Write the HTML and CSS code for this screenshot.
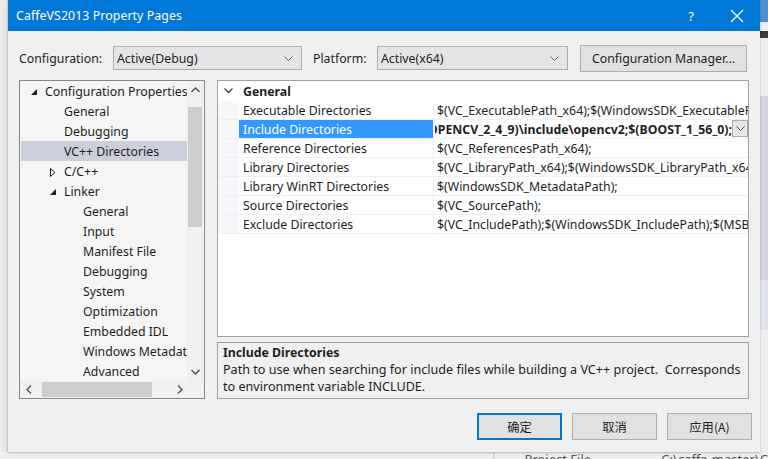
FILE: index.html
```html
<!DOCTYPE html>
<html>
<head>
<meta charset="utf-8">
<link rel="stylesheet" href="styles.css">
</head>
<body>
<div class="desk">
  <div class="top-row">
    <div class="shadow-left"></div>
    <div class="dialog">
      <div class="titlebar">
        <span class="title">CaffeVS2013 Property Pages</span>
        <span class="tb-help">?</span>
        <span class="tb-close">
          <svg width="14" height="14" viewBox="0 0 14 14"><path d="M1 1 L13 13 M13 1 L1 13" stroke="#fff" stroke-width="1.3" fill="none"/></svg>
        </span>
      </div>
      <div class="body">
        <div class="config-row">
          <span class="lbl lbl-config">Configuration:</span>
          <div class="combo combo-config"><span>Active(Debug)</span><svg class="chev" width="9" height="5" viewBox="0 0 9 5"><path d="M0.5 0.5 L4.5 4.5 L8.5 0.5" stroke="#606060" fill="none"/></svg></div>
          <span class="lbl lbl-platform">Platform:</span>
          <div class="combo combo-platform"><span>Active(x64)</span><svg class="chev" width="9" height="5" viewBox="0 0 9 5"><path d="M0.5 0.5 L4.5 4.5 L8.5 0.5" stroke="#606060" fill="none"/></svg></div>
          <div class="btn btn-cfgmgr">Configuration Manager...</div>
        </div>
        <div class="main">
          <div class="tree">
            <div class="tree-inner">
              <div class="tree-rows">
                <div class="trow l0"><span class="tri"><svg width="6" height="6" viewBox="0 0 6 6"><path d="M6 0 L6 6 L0 6 Z" fill="#1e1e1e"/></svg></span>Configuration Properties</div>
                <div class="trow l1">General</div>
                <div class="trow l1">Debugging</div>
                <div class="trow l1 sel">VC++ Directories</div>
                <div class="trow l1 haschild"><span class="tri"><svg width="6" height="9" viewBox="0 0 6 9"><path d="M0.5 0.5 L5 4.5 L0.5 8.5 Z" stroke="#1e1e1e" fill="none"/></svg></span>C/C++</div>
                <div class="trow l1 haschild"><span class="tri"><svg width="6" height="6" viewBox="0 0 6 6"><path d="M6 0 L6 6 L0 6 Z" fill="#1e1e1e"/></svg></span>Linker</div>
                <div class="trow l2">General</div>
                <div class="trow l2">Input</div>
                <div class="trow l2">Manifest File</div>
                <div class="trow l2">Debugging</div>
                <div class="trow l2">System</div>
                <div class="trow l2">Optimization</div>
                <div class="trow l2">Embedded IDL</div>
                <div class="trow l2">Windows Metadata</div>
                <div class="trow l2">Advanced</div>
              </div>
              <div class="vscroll">
                <svg class="sarrow" width="9" height="6" viewBox="0 0 9 6"><path d="M0.5 5 L4.5 1 L8.5 5" stroke="#505050" stroke-width="1.4" fill="none"/></svg>
                <div class="vtrack"><div class="vthumb"></div></div>
                <svg class="sarrow" width="9" height="6" viewBox="0 0 9 6"><path d="M0.5 1 L4.5 5 L8.5 1" stroke="#505050" stroke-width="1.4" fill="none"/></svg>
              </div>
            </div>
            <div class="hscroll-row">
              <div class="hscroll">
                <svg class="sarrow" width="6" height="9" viewBox="0 0 6 9"><path d="M5 0.5 L1 4.5 L5 8.5" stroke="#505050" stroke-width="1.4" fill="none"/></svg>
                <div class="htrack"><div class="hthumb"></div></div>
                <svg class="sarrow" width="6" height="9" viewBox="0 0 6 9"><path d="M1 0.5 L5 4.5 L1 8.5" stroke="#505050" stroke-width="1.4" fill="none"/></svg>
              </div>
              <div class="corner"></div>
            </div>
          </div>
          <div class="right">
            <div class="grid">
              <div class="grow header">
                <span class="gutter"><svg width="9" height="6" viewBox="0 0 9 6"><path d="M0.5 0.5 L4.5 4.5 L8.5 0.5" stroke="#404040" stroke-width="1.3" fill="none"/></svg></span>
                <span class="hname">General</span>
              </div>
              <div class="grow"><span class="gutter"></span><span class="name">Executable Directories</span><span class="val">$(VC_ExecutablePath_x64);$(WindowsSDK_ExecutablePath);$(VS_ExecutablePath)</span></div>
              <div class="grow selrow"><span class="gutter"></span><span class="name">Include Directories</span><span class="val edit"><span class="edit-clip"><b>$(OPENCV_2_4_9)\include\opencv2;$(BOOST_1_56_0);</b></span><span class="ddbtn"><svg width="9" height="5" viewBox="0 0 9 5"><path d="M0.5 0.5 L4.5 4.5 L8.5 0.5" stroke="#505050" fill="none"/></svg></span></span></div>
              <div class="grow"><span class="gutter"></span><span class="name">Reference Directories</span><span class="val">$(VC_ReferencesPath_x64);</span></div>
              <div class="grow"><span class="gutter"></span><span class="name">Library Directories</span><span class="val">$(VC_LibraryPath_x64);$(WindowsSDK_LibraryPath_x64);$(NETFXKitsDir)</span></div>
              <div class="grow"><span class="gutter"></span><span class="name">Library WinRT Directories</span><span class="val">$(WindowsSDK_MetadataPath);</span></div>
              <div class="grow"><span class="gutter"></span><span class="name">Source Directories</span><span class="val">$(VC_SourcePath);</span></div>
              <div class="grow"><span class="gutter"></span><span class="name">Exclude Directories</span><span class="val">$(VC_IncludePath);$(WindowsSDK_IncludePath);$(MSBuild_ExecutablePath)</span></div>
            </div>
            <div class="desc">
              <div class="desc-title">Include Directories</div>
              <div class="desc-text">Path to use when searching for include files while building a VC++ project.&nbsp; Corresponds to environment variable INCLUDE.</div>
            </div>
          </div>
        </div>
        <div class="buttons">
          <div class="btn dbtn primary">确定</div>
          <div class="btn dbtn">取消</div>
          <div class="btn dbtn">应用(A)</div>
        </div>
      </div>
    </div>
    <div class="shadow-right"></div>
  </div>
  <div class="bottom-row">
    <span class="bcell b1"></span>
    <span class="bcell b2">Project File</span>
    <span class="bcell b3">C:\caffe-master\C</span>
  </div>
</div>
</body>
</html>
```
FILE: styles.css
```css
* { box-sizing: border-box; }
html, body { margin: 0; padding: 0; }
body {
  width: 768px;
  height: 459px;
  overflow: hidden;
  background: #e9e9ea;
  font-family: "Noto Sans", "Noto Sans CJK SC", sans-serif;
  font-size: 12.3px;
  color: #1e1e1e;
}
.desk { display: flex; flex-direction: column; }
.top-row { display: flex; height: 452px; }
.shadow-left {
  width: 8px;
  background: linear-gradient(to right, #ececec, #e4e4e4 80%, #d4d4d4);
}
.shadow-right {
  width: 8px;
  background: linear-gradient(to bottom, #4f90d0 0, #4f90d0 22px, #eeeff2 22px, #eeeff2 31px, #3a3a3a 31px, #3a3a3a 38px, #eeeff2 38px, #eeeff2 96px, #d3d4dc 96px, #d3d4dc 280px, #dfe3ec 280px, #dfe3ec 330px, #efefef 330px);
}
.dialog {
  width: 752px;
  display: flex;
  flex-direction: column;
  background: #f0f0f0;
  box-shadow: 0 1px 2px rgba(0,0,0,0.25);
  position: relative;
}
.titlebar {
  height: 31px;
  background: #0078d7;
  color: #fff;
  display: flex;
  align-items: center;
  padding-left: 8px;
}
.title { font-size: 12.4px; flex: 1; letter-spacing: 0.05px; }
.tb-help { width: 46px; text-align: center; font-size: 13px; }
.tb-close { width: 46px; display: flex; justify-content: center; align-items: center; }
.body { flex: 1; display: flex; flex-direction: column; padding: 13px 0 0 11px; }
.config-row { display: flex; align-items: center; height: 28px; }
.lbl-config { width: 94px; }
.combo {
  height: 24px;
  border: 1px solid #adadad;
  background: #e5e5e5;
  display: flex;
  align-items: center;
  justify-content: space-between;
  padding: 0 8px 0 3px;
}
.combo-config { width: 189px; }
.lbl-platform { margin-left: 11px; width: 64px; }
.combo-platform { width: 191px; }
.btn {
  border: 1px solid #adadad;
  background: #e1e1e1;
  display: flex;
  align-items: center;
  justify-content: center;
}
.btn-cfgmgr { margin-left: 12px; width: 167px; height: 27px; }
.main { display: flex; margin-top: 8px; }
.tree {
  width: 186px;
  height: 319px;
  border: 1px solid #828790;
  background: #f5f5f5;
  display: flex;
  flex-direction: column;
}
.tree-inner { flex: 1; display: flex; min-height: 0; }
.tree-rows { flex: 1; overflow: hidden; padding: 0 0 0 1px; }
.trow {
  height: 20px;
  line-height: 21px;
  white-space: nowrap;
  overflow: hidden;
  position: relative;
}
.trow.l0 { padding-left: 24px; }
.trow.l1 { padding-left: 43px; }
.trow.l2 { padding-left: 62px; }
.trow.sel { background: #cccedb; }
.tri { position: absolute; top: 1px; height: 20px; display: flex; align-items: center; }
.l0 .tri { left: 10px; }
.l1 .tri { left: 29px; }
.vscroll {
  width: 16px;
  display: flex;
  flex-direction: column;
  align-items: center;
  background: #f0f0f0;
  margin-right: 1px;
  padding: 6px 0 6px;
}
.vtrack { flex: 1; width: 100%; padding: 14px 1px 0; }
.vthumb { height: 120px; background: #cdcdcd; }
.hscroll-row { display: flex; height: 17px; }
.hscroll {
  flex: 1;
  display: flex;
  align-items: center;
  padding: 0 6px;
  background: #f0f0f0;
}
.htrack { flex: 1; height: 100%; padding: 1px 25px 1px 10px; }
.hthumb { width: 110px; height: 100%; background: #cdcdcd; }
.corner { width: 17px; background: #f0f0f0; }
.right { margin-left: 12px; display: flex; flex-direction: column; width: 532px; }
.grid {
  height: 257px;
  border: 1px solid #a0a0a0;
  background: #fff;
}
.grow {
  display: flex;
  height: 19px;
  border-bottom: 1px solid #f0f0f0;
  white-space: nowrap;
}
.grow.header { height: 20px; border-bottom: none; }
.gutter {
  width: 21px;
  flex: none;
  background: #f7f8fb;
  display: flex;
  align-items: center;
  justify-content: center;
}
.header .gutter { background: #fff; }
.hname { font-weight: bold; padding-left: 4px; line-height: 21px; }
.name {
  width: 195px;
  flex: none;
  padding-left: 4px;
  line-height: 19px;
  border-right: 1px solid #f0f0f0;
  overflow: hidden;
}
.selrow .name { background: #3399ff; color: #fff; }
.val {
  flex: 1;
  overflow: hidden;
  padding-left: 3px;
  line-height: 19px;
}
.val.edit { display: flex; padding-left: 1px; }
.edit-clip {
  flex: 1;
  display: flex;
  justify-content: flex-end;
  overflow: hidden;
  min-width: 0;
}
.edit-clip b { flex: none; }
.ddbtn {
  width: 16px;
  flex: none;
  height: 17px;
  background: #e5e5e5;
  border: 1px solid #adadad;
  display: flex;
  align-items: center;
  justify-content: center;
}
.desc {
  margin-top: 5px;
  height: 57px;
  border: 1px solid #a0a0a0;
  background: #f0f0f0;
  padding: 1px 5px 0 5px;
  line-height: 17px;
}
.desc-title { font-weight: bold; }
.desc-text { font-size: 12.6px; }
.buttons { display: flex; justify-content: flex-end; gap: 10px; margin-top: 14px; padding-right: 8px; }
.dbtn {
  width: 85px;
  height: 27px;
  font-family: "Noto Sans CJK SC", "Noto Sans", sans-serif;
}
.dbtn.primary { border: 2px solid #0078d7; }
.bottom-row {
  height: 7px;
  display: flex;
  overflow: hidden;
  background: #eeeeee;
  color: #555;
  font-size: 13px;
}
.bcell { height: 7px; line-height: 14px; white-space: nowrap; }
.b1 { width: 498px; border-right: 1px solid #d0d0d0; }
.b2 { width: 161px; padding-left: 30px; border-left: 1px solid #e0e0e0; }
.b3 { padding-left: 8px; }
```
